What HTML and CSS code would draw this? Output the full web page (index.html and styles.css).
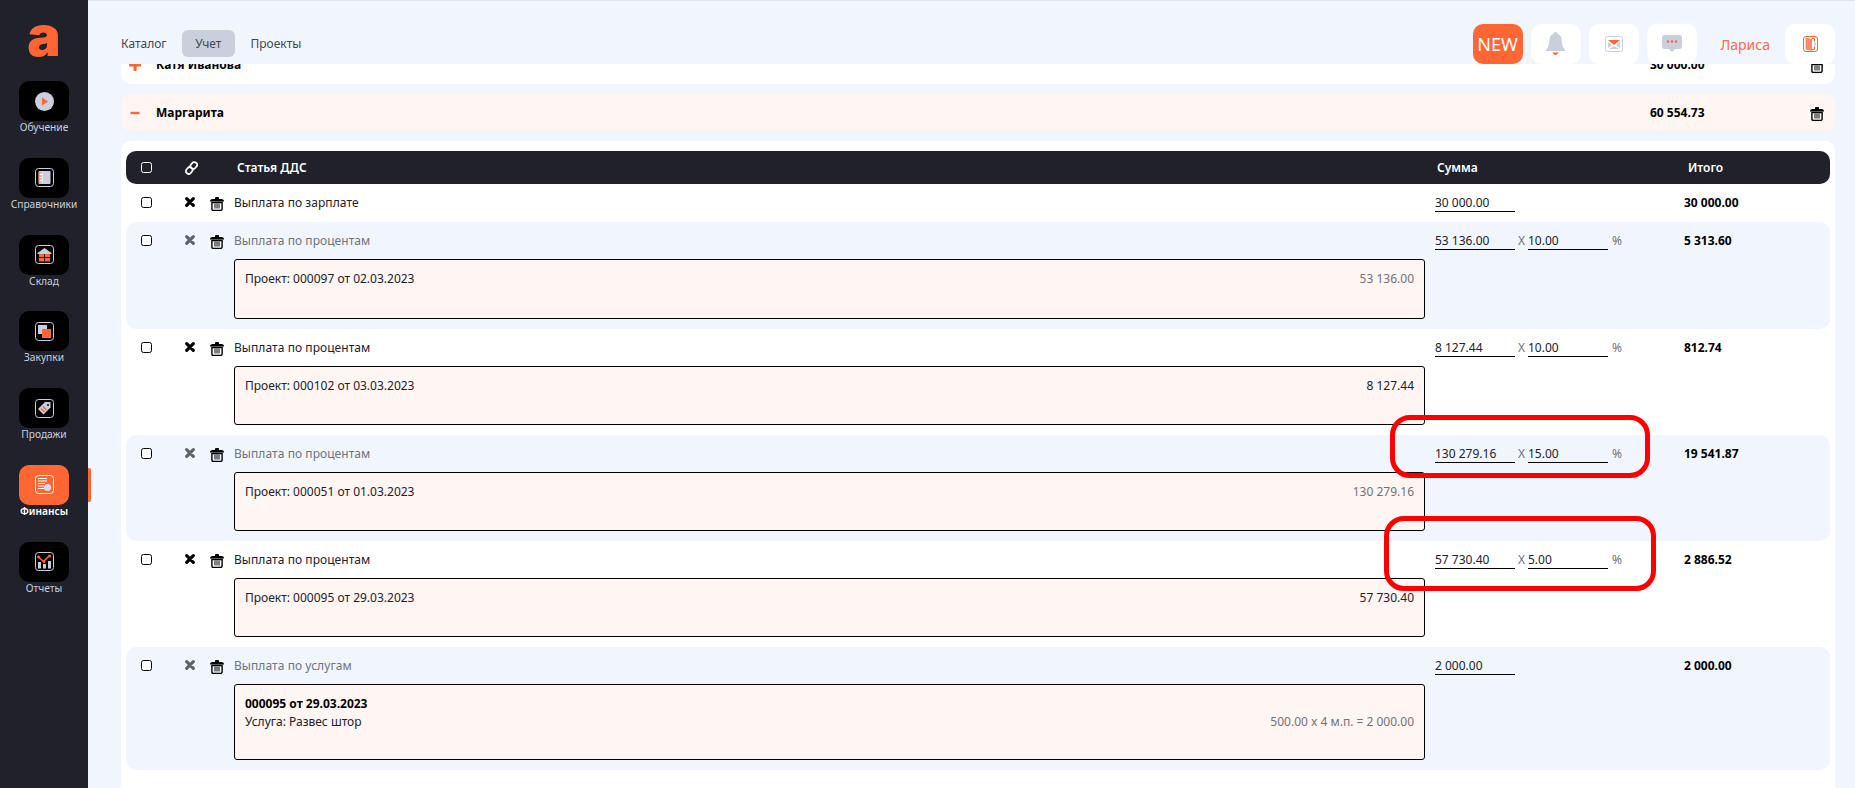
FILE: index.html
```html
<!DOCTYPE html>
<html>

<head>
  <meta charset="utf-8">
  <title>Финансы</title>
  <link rel="stylesheet" href="styles.css">
</head>

<body>
  <aside class="sidebar">
    <div class="logo">a</div>
    <nav class="side-nav">
      <a class="side-item">
        <span class="tile">
          <svg width="19" height="19" viewBox="0 0 19 19"><circle cx="9.5" cy="9.5" r="9.5" fill="#c9cfdd"/><path d="M7 5.5l6 4-6 4z" fill="#ff6633"/></svg>
        </span>
        <span class="side-label">Обучение</span>
      </a>
      <a class="side-item">
        <span class="tile">
          <svg width="19" height="19" viewBox="0 0 19 19"><rect x=".5" y=".5" width="18" height="18" rx="3" fill="none" stroke="#c9cfdd"/><rect x="3.5" y="3" width="12" height="13" rx="1" fill="#c9cfdd"/><rect x="5" y="4" width="2.5" height="11" fill="#fff"/><path d="M3 5h4M3 8h4M3 11h4M3 14h4" stroke="#ff6633" stroke-width="1.2"/></svg>
        </span>
        <span class="side-label">Справочники</span>
      </a>
      <a class="side-item">
        <span class="tile">
          <svg width="19" height="19" viewBox="0 0 19 19"><rect x=".5" y=".5" width="18" height="18" rx="3" fill="none" stroke="#c9cfdd"/><path d="M2.5 8L9.5 3l7 5v1h-14z" fill="#c9cfdd"/><rect x="4" y="9" width="11" height="7.5" fill="#ff6633"/><path d="M9.5 9v7.5M4 12.5h11" stroke="#20212b"/></svg>
        </span>
        <span class="side-label">Склад</span>
      </a>
      <a class="side-item">
        <span class="tile">
          <svg width="19" height="19" viewBox="0 0 19 19"><rect x=".5" y=".5" width="18" height="18" rx="3" fill="none" stroke="#c9cfdd"/><rect x="3" y="3" width="9" height="9" fill="#c9cfdd"/><rect x="7" y="7" width="9" height="9" fill="#ff6633"/></svg>
        </span>
        <span class="side-label">Закупки</span>
      </a>
      <a class="side-item">
        <span class="tile">
          <svg width="19" height="19" viewBox="0 0 19 19"><rect x=".5" y=".5" width="18" height="18" rx="3" fill="none" stroke="#c9cfdd"/><path d="M10 3h5.500v5.500l-7 7-5.500-5.500z" fill="#c9cfdd"/><circle cx="13" cy="6" r="1" fill="#000"/><path d="M6 9.500l3.500 3.500M8 7.500l3.500 3.500" stroke="#ff6633" stroke-width="1.500"/></svg>
        </span>
        <span class="side-label">Продажи</span>
      </a>
      <a class="side-item side-item-active">
        <span class="tile">
          <svg width="19" height="19" viewBox="0 0 19 19"><rect x=".5" y=".5" width="18" height="18" rx="3" fill="none" stroke="#fff"/><path d="M3 3.500h9M3 6h9M3 8.500h7M3 11h6M3 13.500h6" stroke="#fff" stroke-width="1.200"/><circle cx="12.500" cy="12.500" r="3.500" fill="#d8dce6"/></svg>
        </span>
        <span class="side-label">Финансы</span>
      </a>
      <a class="side-item">
        <span class="tile">
          <svg width="19" height="19" viewBox="0 0 19 19"><rect x=".5" y=".5" width="18" height="18" rx="3" fill="none" stroke="#c9cfdd"/><path d="M3 10h3v6.500H3zM8 12h3v4.500H8zM13 9h3v7.500h-3z" fill="#c9cfdd"/><path d="M3.500 5l5 4.500 6-6" fill="none" stroke="#ff6633" stroke-width="1.500"/><circle cx="3.500" cy="5" r="1.500" fill="#ff6633"/><circle cx="9" cy="9.500" r="1.500" fill="#ff6633"/><circle cx="14.500" cy="4" r="1.500" fill="#ff6633"/></svg>
        </span>
        <span class="side-label">Отчеты</span>
      </a>
    </nav>
  </aside>

  <main class="main">
    <header class="topbar">
      <nav class="tabs">
        <a class="tab">Каталог</a>
        <a class="tab tab-active">Учет</a>
        <a class="tab">Проекты</a>
      </nav>
      <div class="actions">
        <a class="action action-new">NEW</a>
        <a class="action">
          <svg width="19" height="24" viewBox="0 0 19 24"><path d="M9.500 0c1.200 0 2 .8 2 1.800 3 1 4 3.500 4.200 7 .2 4 1 6.500 3.300 9.200v1H0v-1c2.300-2.700 3.100-5.200 3.300-9.200.2-3.500 1.200-6 4.200-7C7.500.8 8.300 0 9.500 0z" fill="#c9cfdd"/><path d="M6.500 20.500h6c-.8 1.500-1.800 2.500-3 2.500s-2.200-1-3-2.500z" fill="#ff6633"/></svg>
        </a>
        <a class="action">
          <svg width="18" height="16" viewBox="0 0 18 16"><rect x=".5" y=".5" width="17" height="15" rx="2" fill="#fff" stroke="#c9cfdd"/><path d="M3 4h12L9 9z" fill="#ff6633"/><path d="M3 6l4 3.500L3 12zM15 6l-4 3.500 4 2.500zM4 13l4-2.500h2l4 2.500z" fill="#c9cfdd"/></svg>
        </a>
        <a class="action">
          <svg width="20" height="18" viewBox="0 0 20 18"><path d="M3 0h14a3 3 0 0 1 3 3v8a3 3 0 0 1-3 3h-4l-3 3-3-3H3a3 3 0 0 1-3-3V3a3 3 0 0 1 3-3z" fill="#c9cfdd"/><circle cx="6" cy="6.500" r="1.200" fill="#ff6633"/><circle cx="10" cy="6.500" r="1.200" fill="#ff6633"/><circle cx="14" cy="6.500" r="1.200" fill="#ff6633"/></svg>
        </a>
        <span class="user-name">Лариса</span>
        <a class="action">
          <svg width="15" height="16" viewBox="0 0 15 16"><rect x=".5" y=".5" width="14" height="15" rx="2.500" fill="none" stroke="#ff6633"/><path d="M2.500 1.500l6.500 1.500v12l-6.500-1.500z" fill="#ff8a66"/><path d="M9 2.500h2.500v3M9 13.500h2.500v-3" fill="none" stroke="#ff6633"/><path d="M11 5.500l2.500 2.500-2.500 2.500z" fill="#c9cfdd"/></svg>
        </a>
      </div>
    </header>

    <div class="content">
      <section class="person person-cut">
        <svg class="toggle" width="12" height="12" viewBox="0 0 12 12"><path d="M0 4.500h12v3H0zM4.500 0h3v12h-3z" fill="#ff6633"/></svg>
        <span class="person-name">Катя Иванова</span>
        <span class="person-sum">30 000.00</span>
        <svg class="trash" width="14" height="14" viewBox="0 0 14 14"><use href="#trash-shape"/></svg>
      </section>

      <section class="person person-open">
        <svg class="toggle" width="12" height="12" viewBox="0 0 12 12"><path d="M1.500 4.800h9v2.400h-9z" fill="#ff6633"/></svg>
        <span class="person-name">Маргарита</span>
        <span class="person-sum">60 554.73</span>
        <svg class="trash" width="14" height="14" viewBox="0 0 14 14"><use href="#trash-shape"/></svg>
      </section>

      <section class="panel">
        <div class="table-head">
          <span class="check-wrap"><input type="checkbox" class="check check-light"></span>
          <span class="x-cell">
            <svg width="13" height="14" viewBox="0 0 13 14" fill="none" stroke="#fff" stroke-width="1.800"><rect x="6" y="1" width="5.500" height="7" rx="2.500" transform="rotate(40 8.750 4.500)"/><rect x="1.500" y="6" width="5.500" height="7" rx="2.500" transform="rotate(40 4.250 9.500)"/></svg>
          </span>
          <span class="head-title">Статья ДДС</span>
          <span class="head-sum">Сумма</span>
          <span class="head-total">Итого</span>
        </div>

        <div class="row row-short">
          <span class="check-wrap"><input type="checkbox" class="check"></span>
          <span class="x-cell"><svg class="x-icon" width="10" height="10" viewBox="0 0 10 10"><use href="#x-shape"/></svg></span>
          <span class="trash-cell"><svg width="14" height="14" viewBox="0 0 14 14"><use href="#trash-shape"/></svg></span>
          <div class="row-body"><div class="row-title">Выплата по зарплате</div></div>
          <div class="calc"><span class="field">30 000.00</span></div>
          <div class="row-total">30 000.00</div>
        </div>

        <div class="row row-blue">
          <span class="check-wrap"><input type="checkbox" class="check"></span>
          <span class="x-cell"><svg class="x-icon" width="10" height="10" viewBox="0 0 10 10"><use href="#x-shape"/></svg></span>
          <span class="trash-cell"><svg width="14" height="14" viewBox="0 0 14 14"><use href="#trash-shape"/></svg></span>
          <div class="row-body">
            <div class="row-title">Выплата по процентам</div>
            <div class="box">
              <span>Проект: 000097 от 02.03.2023</span>
              <span class="box-value">53 136.00</span>
            </div>
          </div>
          <div class="calc"><span class="field">53 136.00</span><span class="mul">X</span><span class="field">10.00</span><span class="pct">%</span></div>
          <div class="row-total">5 313.60</div>
        </div>

        <div class="row">
          <span class="check-wrap"><input type="checkbox" class="check"></span>
          <span class="x-cell"><svg class="x-icon" width="10" height="10" viewBox="0 0 10 10"><use href="#x-shape"/></svg></span>
          <span class="trash-cell"><svg width="14" height="14" viewBox="0 0 14 14"><use href="#trash-shape"/></svg></span>
          <div class="row-body">
            <div class="row-title">Выплата по процентам</div>
            <div class="box">
              <span>Проект: 000102 от 03.03.2023</span>
              <span class="box-value">8 127.44</span>
            </div>
          </div>
          <div class="calc"><span class="field">8 127.44</span><span class="mul">X</span><span class="field">10.00</span><span class="pct">%</span></div>
          <div class="row-total">812.74</div>
        </div>

        <div class="row row-blue">
          <span class="check-wrap"><input type="checkbox" class="check"></span>
          <span class="x-cell"><svg class="x-icon" width="10" height="10" viewBox="0 0 10 10"><use href="#x-shape"/></svg></span>
          <span class="trash-cell"><svg width="14" height="14" viewBox="0 0 14 14"><use href="#trash-shape"/></svg></span>
          <div class="row-body">
            <div class="row-title">Выплата по процентам</div>
            <div class="box">
              <span>Проект: 000051 от 01.03.2023</span>
              <span class="box-value">130 279.16</span>
            </div>
          </div>
          <div class="calc"><span class="field">130 279.16</span><span class="mul">X</span><span class="field">15.00</span><span class="pct">%</span></div>
          <div class="row-total">19 541.87</div>
        </div>

        <div class="row">
          <span class="check-wrap"><input type="checkbox" class="check"></span>
          <span class="x-cell"><svg class="x-icon" width="10" height="10" viewBox="0 0 10 10"><use href="#x-shape"/></svg></span>
          <span class="trash-cell"><svg width="14" height="14" viewBox="0 0 14 14"><use href="#trash-shape"/></svg></span>
          <div class="row-body">
            <div class="row-title">Выплата по процентам</div>
            <div class="box">
              <span>Проект: 000095 от 29.03.2023</span>
              <span class="box-value">57 730.40</span>
            </div>
          </div>
          <div class="calc"><span class="field">57 730.40</span><span class="mul">X</span><span class="field">5.00</span><span class="pct">%</span></div>
          <div class="row-total">2 886.52</div>
        </div>

        <div class="row row-blue">
          <span class="check-wrap"><input type="checkbox" class="check"></span>
          <span class="x-cell"><svg class="x-icon" width="10" height="10" viewBox="0 0 10 10"><use href="#x-shape"/></svg></span>
          <span class="trash-cell"><svg width="14" height="14" viewBox="0 0 14 14"><use href="#trash-shape"/></svg></span>
          <div class="row-body">
            <div class="row-title">Выплата по услугам</div>
            <div class="box box-service">
              <div>
                <div class="box-bold">000095 от 29.03.2023</div>
                <div>Услуга: Развес штор</div>
              </div>
              <span class="box-value box-value-low">500.00 x 4 м.п. = 2 000.00</span>
            </div>
          </div>
          <div class="calc"><span class="field">2 000.00</span></div>
          <div class="row-total">2 000.00</div>
        </div>
      </section>
    </div>
  </main>

  <div class="mark mark-one"></div>
  <div class="mark mark-two"></div>

  <svg class="defs" width="0" height="0">
    <defs>
      <g id="trash-shape">
        <path d="M5 2V1a1 1 0 0 1 1-1h2a1 1 0 0 1 1 1v1h2.500c1 0 2.500 .8 2.500 2v.5H0V4c0-1.200 1.500-2 2.500-2z" fill="#000"/>
        <path d="M1.900 5.500h10.200V12a1.500 1.500 0 0 1-1.500 1.500H3.400A1.500 1.500 0 0 1 1.900 12z" fill="none" stroke="#000" stroke-width="1.400"/>
        <path d="M5 6.500v5M7 6.500v5M9 6.500v5" stroke="#000" stroke-width="1"/>
      </g>
      <path id="x-shape" d="M1.700 1.700l6.600 6.600M8.300 1.700L1.700 8.300" fill="none" stroke="currentColor" stroke-width="3.200" stroke-linecap="round"/>
    </defs>
  </svg>
</body>

</html>
```

FILE: styles.css
```css
* {
  box-sizing: border-box;
}

html,
body {
  height: 100%;
}

body {
  margin: 0;
  display: flex;
  overflow: hidden;
  background: #f1f6fe;
  font-family: "Noto Sans", "Open Sans", sans-serif;
  font-size: 12px;
  color: #20212b;
  position: relative;
}

.defs {
  position: absolute;
}

/* sidebar */
.sidebar {
  width: 88px;
  flex: none;
  background: #20212b;
  position: relative;
}

.logo {
  height: 81px;
  padding-top: 6px;
  text-align: center;
  font-family: "Inter", "Liberation Sans", sans-serif;
  font-weight: 900;
  font-size: 56px;
  line-height: 60px;
  color: #ff6633;
}

.side-nav {
  display: flex;
  flex-direction: column;
  gap: 23.800px;
}

.side-item {
  display: flex;
  flex-direction: column;
  align-items: center;
}

.tile {
  width: 50px;
  height: 40px;
  border-radius: 10px;
  background: #000;
  display: flex;
  align-items: center;
  justify-content: center;
}

.side-label {
  font-size: 10.200px;
  line-height: 13px;
  color: #c9cfdd;
}

.side-item-active {
  position: relative;
}

.side-item-active .tile {
  background: #ff6633;
}

.side-item-active .side-label {
  color: #fff;
  font-weight: 600;
}

.side-item-active::after {
  content: "";
  position: absolute;
  right: 0;
  top: 3px;
  width: 3px;
  height: 34px;
  border-radius: 0 2px 2px 0;
  background: #ff6633;
  transform: translateX(3px);
}

/* top bar */
.main {
  flex: 1;
  min-width: 0;
  display: flex;
  flex-direction: column;
  border-top: 1px solid #e0e3ec;
}

.topbar {
  height: 63px;
  flex: none;
  padding: 23px 20px 0 33px;
  display: flex;
  justify-content: space-between;
  align-items: flex-start;
}

.tabs {
  display: flex;
  gap: 2px;
  margin-top: 6px;
}

.tab {
  height: 27px;
  line-height: 27px;
  padding: 0 13.500px;
  border-radius: 6px;
  color: #44464f;
}

.tab:first-child {
  padding: 0 13px 0 0;
}

.tab-active {
  background: #c9cfdd;
}

.actions {
  display: flex;
  align-items: center;
  gap: 8px;
}

.action {
  width: 50px;
  height: 40px;
  border-radius: 10px;
  background: #fff;
  display: flex;
  align-items: center;
  justify-content: center;
}

.action-new {
  background: #ff6633;
  color: #fff;
  font-size: 18px;
}

.user-name {
  color: #ff6a45;
  font-size: 14px;
  margin: 0 7px 0 16px;
}

/* content */
.content {
  flex: 1;
  min-height: 0;
  overflow: hidden;
  padding: 0 20px 0 33px;
}

.person {
  height: 37px;
  border-radius: 10px;
  background: #fff;
  display: flex;
  align-items: center;
  margin-bottom: 10px;
  padding-left: 8px;
  font-weight: 700;
  color: #000;
}

.person-cut {
  margin-top: -17px;
  padding-bottom: 2px;
}

.person-open {
  background: #fff5f3;
}

.toggle {
  flex: none;
}

.person-name {
  margin-left: 15px;
  width: 1494px;
}

.person-sum {
  width: 160px;
}

.trash {
  flex: none;
  margin-top: 3px;
}

.panel {
  background: #fff;
  border-radius: 10px 10px 0 0;
  padding: 10px 5px 0;
  height: 660px;
}

.table-head {
  height: 33px;
  border-radius: 10px;
  background: #20212b;
  color: #fff;
  font-weight: 600;
  display: flex;
  align-items: center;
  padding-left: 15px;
}

.check-wrap {
  width: 44px;
  flex: none;
  display: flex;
}

.check {
  appearance: none;
  width: 11px;
  height: 11px;
  margin: 0;
  background: #fff;
  border: 1px solid #000;
  border-radius: 2.500px;
}

.check-light {
  background: transparent;
  border-color: #fff;
}

.x-cell {
  width: 25px;
  flex: none;
  display: flex;
  color: #000;
}

.head-title {
  margin-left: 27px;
  width: 1200px;
}

.head-sum {
  width: 251px;
}

.row {
  display: grid;
  grid-template-columns: 44px 25px 24px 1191px 259px 1fr;
  padding: 10px 0 10px 15px;
  border-radius: 10px;
}

.row-short {
  height: 38.250px;
}

.row-blue {
  background: #f1f6fe;
}

.row .check-wrap,
.row .x-cell,
.trash-cell {
  padding-top: 3px;
}

.row-blue .x-cell {
  color: #5f636e;
}

.row-blue .row-title,
.row-blue .box-value,
.row-blue .pct,
.row-blue .mul {
  color: #6f737c;
}

.row-title {
  line-height: 18px;
  letter-spacing: .06px;
}

.box {
  margin-top: 9px;
  height: 59.250px;
  border: 1px solid #000;
  border-radius: 3px;
  background: #fff5f3;
  padding: 10px 10px 0;
  display: flex;
  justify-content: space-between;
  line-height: 18px;
}

.box-value {
  color: #20212b;
}

.box-service {
  height: 76px;
}

.box-bold {
  font-weight: 700;
  color: #000;
}

.box-value-low {
  align-self: flex-start;
  margin-top: 18px;
  color: #6f737c;
}

.calc {
  display: flex;
  align-items: flex-start;
  padding-left: 10px;
}

.field {
  width: 80px;
  height: 18px;
  line-height: 18px;
  border-bottom: 1px solid #000;
}

.mul {
  width: 13px;
  text-align: center;
  line-height: 18px;
  color: #6f737c;
}

.pct {
  line-height: 18px;
  margin-left: 4px;
  color: #6f737c;
}

.row-total {
  font-weight: 700;
  line-height: 18px;
  color: #000;
}

/* red hand-drawn frames on the screenshot */
.mark {
  position: absolute;
  border: 5px solid #f00;
  border-radius: 20px;
}

.mark-one {
  left: 1390px;
  top: 415px;
  width: 260px;
  height: 63px;
}

.mark-two {
  left: 1384px;
  top: 516px;
  width: 272px;
  height: 75px;
}
```
